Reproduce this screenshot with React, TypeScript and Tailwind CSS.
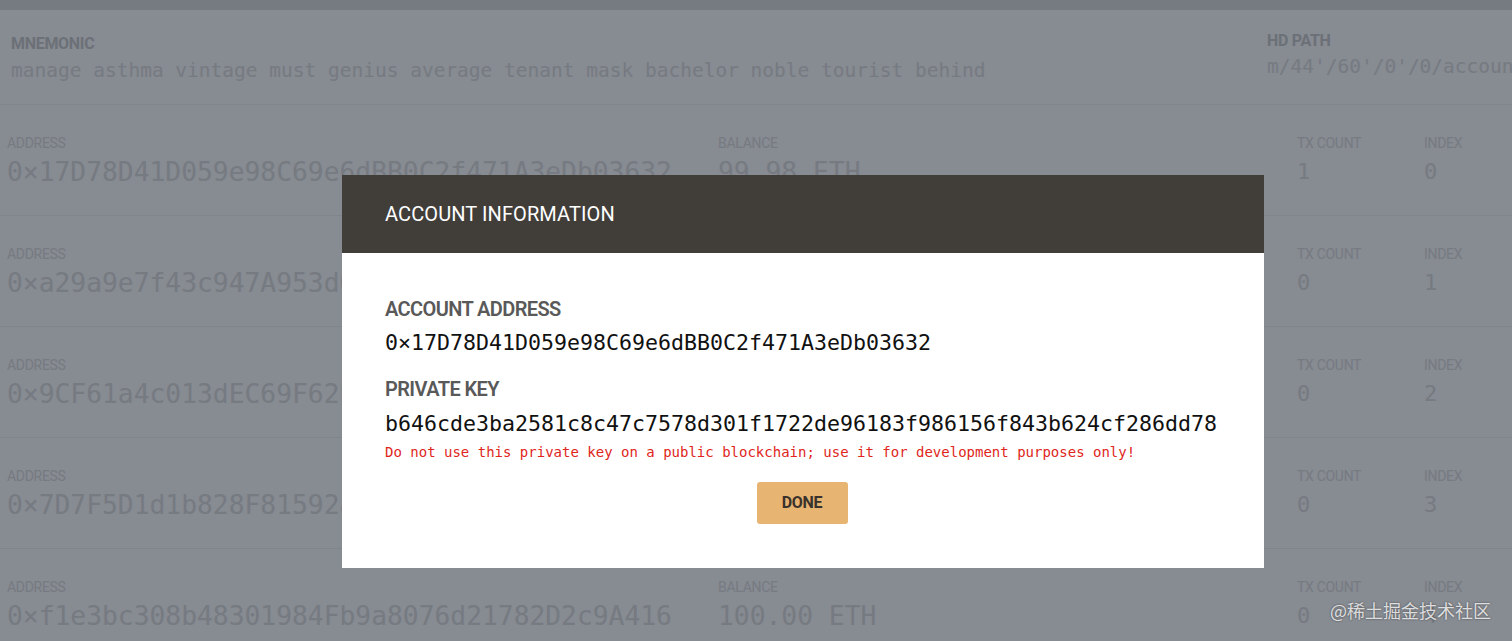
import React from "react";

const rows = [
  { address: "0×17D78D41D059e98C69e6dBB0C2f471A3eDb03632", balance: "99.98 ETH", tx: "1", index: "0" },
  { address: "0×a29a9e7f43c947A953d6E9a6f2e8C1b04D4e5c8B", balance: "100.00 ETH", tx: "0", index: "1" },
  { address: "0×9CF61a4c013dEC69F62b3C4a1D8e6f7A2b0c9E14", balance: "100.00 ETH", tx: "0", index: "2" },
  { address: "0×7D7F5D1d1b828F81592aC7e3B4d6F09a1E2c5D37", balance: "100.00 ETH", tx: "0", index: "3" },
  { address: "0×f1e3bc308b48301984Fb9a8076d21782D2c9A416", balance: "100.00 ETH", tx: "0", index: "4" },
];

const mono = "font-['DejaVu_Sans_Mono',monospace]";
const sans = "font-['Roboto',sans-serif]";

function Row({ r }: { r: (typeof rows)[number] }) {
  return (
    <div className="grid grid-cols-[718px_579px_127px_1fr] border-b border-[#80848b] h-[111px] pt-[30px]">
      <div className="pl-[7px]">
        <div className={`${sans} text-[14px] leading-[16px] text-[#767a81] tracking-[-0.3px]`}>ADDRESS</div>
        <div className={`${mono} text-[26.3px] leading-[30px] mt-[6px] text-[#767a81] whitespace-nowrap`}>{r.address}</div>
      </div>
      <div>
        <div className={`${sans} text-[14px] leading-[16px] text-[#767a81] tracking-[-0.3px]`}>BALANCE</div>
        <div className={`${mono} text-[26.3px] leading-[30px] mt-[6px] text-[#767a81] whitespace-nowrap`}>{r.balance}</div>
      </div>
      <div>
        <div className={`${sans} text-[14px] leading-[16px] text-[#767a81] tracking-[-0.3px]`}>TX COUNT</div>
        <div className={`${mono} text-[22px] leading-[30px] mt-[6px] text-[#767a81]`}>{r.tx}</div>
      </div>
      <div>
        <div className={`${sans} text-[14px] leading-[16px] text-[#767a81] tracking-[-0.3px]`}>INDEX</div>
        <div className={`${mono} text-[22px] leading-[30px] mt-[6px] text-[#767a81]`}>{r.index}</div>
      </div>
    </div>
  );
}

export default function App() {
  return (
    <div className="relative w-[1512px] h-[641px] overflow-hidden bg-[#878b92]">
      <div className="h-[10px] bg-[#767b82]" />
      <div className="flex h-[95px] border-b border-[#80848b] overflow-hidden">
        <div className="pl-[11px] pt-[25px] w-[1267px] shrink-0">
          <div className={`${sans} font-bold text-[16px] leading-[18px] text-[#6c7077] tracking-[-0.3px]`}>MNEMONIC</div>
          <div className={`${mono} text-[19.5px] leading-[24px] mt-[6px] text-[#767a81] whitespace-nowrap`}>
            manage asthma vintage must genius average tenant mask bachelor noble tourist behind
          </div>
        </div>
        <div className="pt-[22px] whitespace-nowrap min-w-0">
          <div className={`${sans} font-bold text-[16px] leading-[18px] text-[#6c7077] tracking-[-0.3px]`}>HD PATH</div>
          <div className={`${mono} text-[19.5px] leading-[24px] mt-[5px] text-[#767a81]`}>m/44'/60'/0'/0/account_index</div>
        </div>
      </div>
      {rows.map((r) => (
        <Row key={r.index} r={r} />
      ))}

      <div className="absolute left-[342px] top-[175px] w-[922px] bg-white">
        <div className="h-[78px] bg-[#413e3a] flex items-center pl-[43px]">
          <div className={`${sans} text-[20px] text-white tracking-[0.1px]`}>ACCOUNT INFORMATION</div>
        </div>
        <div className="pl-[43px] pt-[44px] pb-[44px]">
          <div className={`${sans} font-semibold text-[20px] leading-[24px] text-[#595959] tracking-[-0.6px]`}>ACCOUNT ADDRESS</div>
          <div className={`${mono} text-[21.6px] leading-[28px] mt-[8px] text-[#111]`}>0×17D78D41D059e98C69e6dBB0C2f471A3eDb03632</div>
          <div className={`${sans} font-semibold text-[20px] leading-[24px] mt-[20px] text-[#595959] tracking-[-0.6px]`}>PRIVATE KEY</div>
          <div className={`${mono} text-[21.6px] leading-[28px] mt-[9px] text-[#111]`}>b646cde3ba2581c8c47c7578d301f1722de96183f986156f843b624cf286dd78</div>
          <div className={`${mono} text-[14px] leading-[18px] mt-[5px] text-[#e0261c]`}>
            Do not use this private key on a public blockchain; use it for development purposes only!
          </div>
          <div className="flex justify-center pr-[45px] mt-[21px]">
            <button className={`${sans} w-[91px] h-[42px] rounded-[3px] bg-[#e8b472] text-[#3a322c] font-bold text-[16px] tracking-[-0.3px]`}>
              DONE
            </button>
          </div>
        </div>
      </div>

      <div className="absolute left-[1330px] top-[597px] font-['Noto_Sans_CJK_SC',sans-serif] text-[18px] text-white/80 [text-shadow:0_0_2px_rgba(0,0,0,0.6)]">
        @稀土掘金技术社区
      </div>
    </div>
  );
}
